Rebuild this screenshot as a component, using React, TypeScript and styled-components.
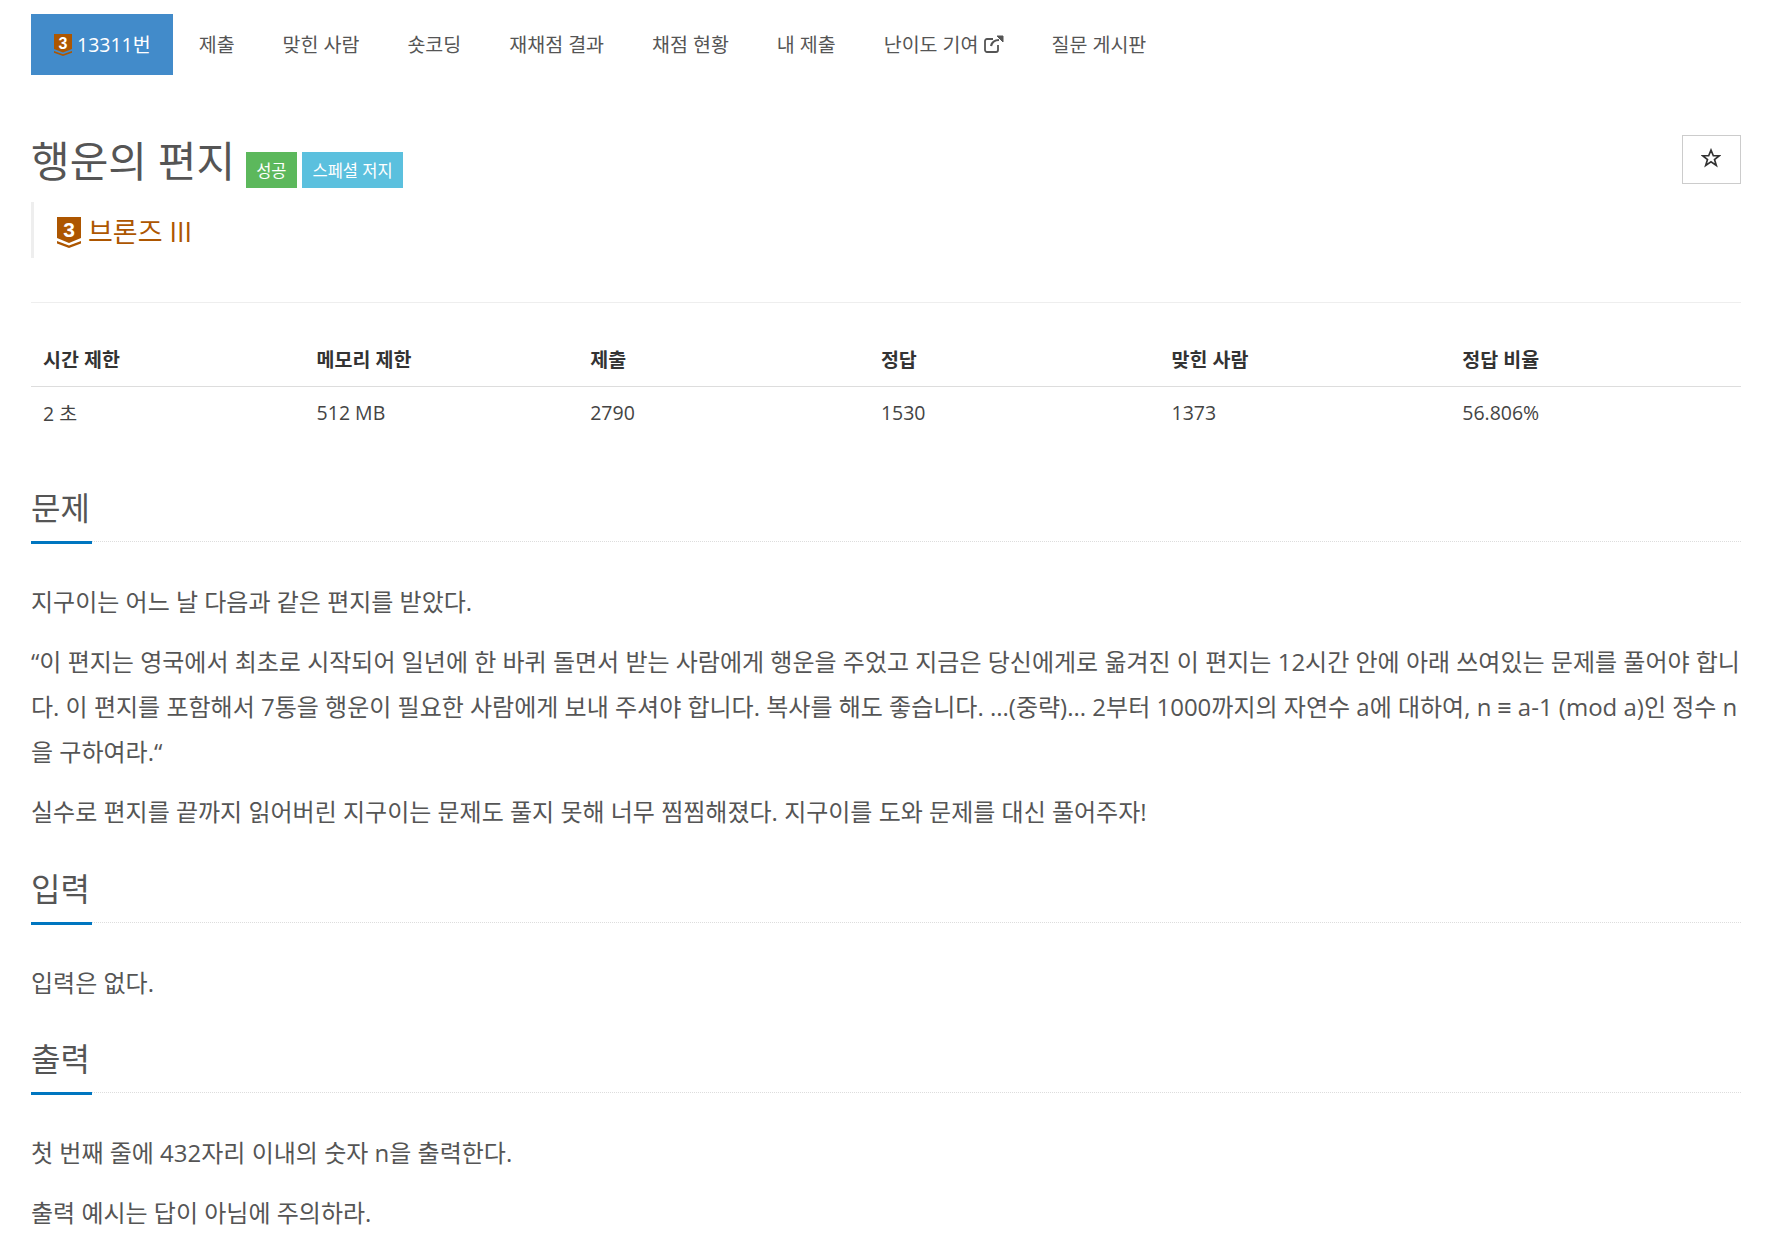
import React from "react";
import styled, { createGlobalStyle } from "styled-components";

const Global = createGlobalStyle`
  html, body { margin: 0; padding: 0; background: #fff; }
  body { font-family: "Open Sans", "Noto Sans CJK KR", sans-serif; color: #555; font-size: 16px; }
  * { box-sizing: border-box; }
`;

const Page = styled.div`
  width: 1765px;
  height: 1240px;
  overflow: hidden;
  padding: 14px 24px 0 31px;
`;

const Nav = styled.nav`
  display: flex;
  height: 61px;
`;

const Tab = styled.a<{ $active?: boolean }>`
  display: flex;
  align-items: center;
  gap: 5px;
  height: 61px;
  padding: ${(p) => (p.$active ? "0 22px 2px 23px" : "0 24px 2px")};
  margin-right: ${(p) => (p.$active ? "2px" : "0")};
  font-size: 19.5px;
  color: ${(p) => (p.$active ? "#fff" : "#555")};
  background: ${(p) => (p.$active ? "#428bca" : "transparent")};
`;

const HeaderRow = styled.div`
  display: flex;
  justify-content: space-between;
  align-items: flex-start;
  margin-top: 60px;
`;

const Title = styled.h1`
  display: flex;
  align-items: flex-end;
  margin: 0;
  font-size: 42px;
  line-height: 52px;
  font-weight: 400;
  color: #555;
`;

const Label = styled.span<{ $bg: string; $first?: boolean }>`
  display: inline-flex;
  align-items: center;
  height: 36px;
  padding: ${(p) => (p.$first ? "2px 10px 0" : "2px 10px 0 11px")};
  margin-left: ${(p) => (p.$first ? "11px" : "5px")};
  margin-bottom: -1px;
  font-size: 16.5px;
  color: #fff;
  background: ${(p) => p.$bg};
`;

const StarButton = styled.button`
  width: 59px;
  height: 49px;
  border: 1px solid #ccc;
  background: #fff;
  display: flex;
  align-items: center;
  justify-content: center;
  padding: 0 1px 4px 0;
`;

const Tier = styled.blockquote`
  display: flex;
  align-items: center;
  gap: 7px;
  height: 56px;
  margin: 15px 0 0;
  padding-left: 23px;
  border-left: 3px solid #eee;
  font-size: 27px;
  color: #ad5600;
`;

const Rule = styled.hr`
  border: 0;
  border-top: 1px solid #eee;
  margin: 44px 0 0;
`;

const Table = styled.table`
  width: 100%;
  margin-top: 21px;
  border-collapse: collapse;
  table-layout: fixed;
  font-size: 19.5px;
  color: #333;
  th, td { text-align: left; padding: 0 0 0 12px; }
  th { height: 62px; vertical-align: bottom; padding-bottom: 13px; font-weight: 700; border-bottom: 1px solid #ddd; }
  td { height: 53px; color: #444; }
`;

const Col = styled.col<{ $w: string }>`
  width: ${(p) => p.$w};
`;

const Section = styled.section<{ $first?: boolean }>`
  margin-top: ${(p) => (p.$first ? "42px" : "27.5px")};
`;

const Heading = styled.div`
  border-bottom: 1px dotted #ddd;
  height: 61px;
`;

const HeadingText = styled.h2`
  display: inline-block;
  margin: 0;
  height: 63px;
  padding-right: 2px;
  font-size: 32px;
  line-height: 54px;
  font-weight: 400;
  color: #555;
  border-bottom: 3px solid #0076c0;
`;

const Para = styled.p`
  margin: 0 0 15px;
  font-family: "Open Sans", "Liberation Sans", "Noto Sans CJK KR", sans-serif;
  font-size: 24px;
  line-height: 45px;
  color: #555;
  word-break: break-all;
`;

const Body = styled.div`
  margin-top: 37px;
`;

const ShieldBox = styled.span<{ $w: number; $h: number; $mt: number }>`
  position: relative;
  display: inline-block;
  flex: none;
  width: ${(p) => p.$w}px;
  height: ${(p) => p.$h}px;
  margin-top: ${(p) => p.$mt}px;
  svg { display: block; width: 100%; height: 100%; }
`;

const ShieldNum = styled.span<{ $fs: number }>`
  position: absolute;
  left: 0;
  right: 0;
  top: 6%;
  text-align: center;
  font-family: "Liberation Sans", sans-serif;
  font-size: ${(p) => p.$fs}px;
  line-height: 1.1;
  font-weight: 700;
  color: #fff;
`;

const Shield = ({ w, h, fs, mt }: { w: number; h: number; fs: number; mt: number }) => (
  <ShieldBox $w={w} $h={h} $mt={mt}>
    <svg viewBox="0 0 24 31" preserveAspectRatio="none" aria-hidden="true">
      <path d="M0 0H24V21L12 26L0 21Z" fill="#ad5600" />
      <path d="M0 24L12 28.5L24 24V26.5L12 31L0 26.5Z" fill="#ad5600" />
    </svg>
    <ShieldNum $fs={fs}>3</ShieldNum>
  </ShieldBox>
);

const ExternalIcon = () => (
  <svg width="20" height="18" viewBox="0 0 20 18" fill="none" stroke="#555" aria-hidden="true">
    <path d="M14 10V15A2 2 0 0 1 12 17H3A2 2 0 0 1 1 15V6A2 2 0 0 1 3 4H9" strokeWidth="1.8" />
    <path d="M7 11C8 7 11 5 15 5" strokeWidth="2.2" />
    <path d="M13 1H19V7Z" fill="#555" strokeWidth="1" />
  </svg>
);

const StarIcon = () => (
  <svg width="20" height="20" viewBox="0 0 24 24" fill="none" stroke="#333" strokeWidth="2" aria-hidden="true">
    <path d="M12 2.5L14.8 9.3H22L16.2 13.8L18.4 21L12 16.6L5.6 21L7.8 13.8L2 9.3H9.2Z" />
  </svg>
);

const tabs = ["제출", "맞힌 사람", "숏코딩", "재채점 결과", "채점 현황", "내 제출"];

export default function App() {
  return (
    <Page>
      <Global />
      <Nav>
        <Tab $active>
          <Shield w={18} h={22} fs={16} mt={3} />
          13311번
        </Tab>
        {tabs.map((t) => (
          <Tab key={t}>{t}</Tab>
        ))}
        <Tab>
          난이도 기여
          <ExternalIcon />
        </Tab>
        <Tab>질문 게시판</Tab>
      </Nav>
      <HeaderRow>
        <Title>
          행운의 편지
          <Label $first $bg="#5cb85c">성공</Label>
          <Label $bg="#5bc0de">스페셜 저지</Label>
        </Title>
        <StarButton aria-label="star">
          <StarIcon />
        </StarButton>
      </HeaderRow>
      <Tier>
        <Shield w={24} h={31} fs={21} mt={4} />
        브론즈 III
      </Tier>
      <Rule />
      <Table>
        <colgroup>
          <Col $w="16%" />
          <Col $w="16%" />
          <Col $w="17%" />
          <Col $w="17%" />
          <Col $w="17%" />
          <Col $w="17%" />
        </colgroup>
        <thead>
          <tr>
            <th>시간 제한</th>
            <th>메모리 제한</th>
            <th>제출</th>
            <th>정답</th>
            <th>맞힌 사람</th>
            <th>정답 비율</th>
          </tr>
        </thead>
        <tbody>
          <tr>
            <td>2 초</td>
            <td>512 MB</td>
            <td>2790</td>
            <td>1530</td>
            <td>1373</td>
            <td>56.806%</td>
          </tr>
        </tbody>
      </Table>
      <Section $first>
        <Heading>
          <HeadingText>문제</HeadingText>
        </Heading>
        <Body>
          <Para>지구이는 어느 날 다음과 같은 편지를 받았다.</Para>
          <Para>“이 편지는 영국에서 최초로 시작되어 일년에 한 바퀴 돌면서 받는 사람에게 행운을 주었고 지금은 당신에게로 옮겨진 이 편지는 12시간 안에 아래 쓰여있는 문제를 풀어야 합니다. 이 편지를 포함해서 7통을 행운이 필요한 사람에게 보내 주셔야 합니다. 복사를 해도 좋습니다. ...(중략)... 2부터 1000까지의 자연수 a에 대하여, n ≡ a-1 (mod a)인 정수 n을 구하여라.“</Para>
          <Para>실수로 편지를 끝까지 읽어버린 지구이는 문제도 풀지 못해 너무 찜찜해졌다. 지구이를 도와 문제를 대신 풀어주자!</Para>
        </Body>
      </Section>
      <Section>
        <Heading>
          <HeadingText>입력</HeadingText>
        </Heading>
        <Body>
          <Para>입력은 없다.</Para>
        </Body>
      </Section>
      <Section>
        <Heading>
          <HeadingText>출력</HeadingText>
        </Heading>
        <Body>
          <Para>첫 번째 줄에 432자리 이내의 숫자 n을 출력한다.</Para>
          <Para>출력 예시는 답이 아님에 주의하라.</Para>
        </Body>
      </Section>
    </Page>
  );
}
